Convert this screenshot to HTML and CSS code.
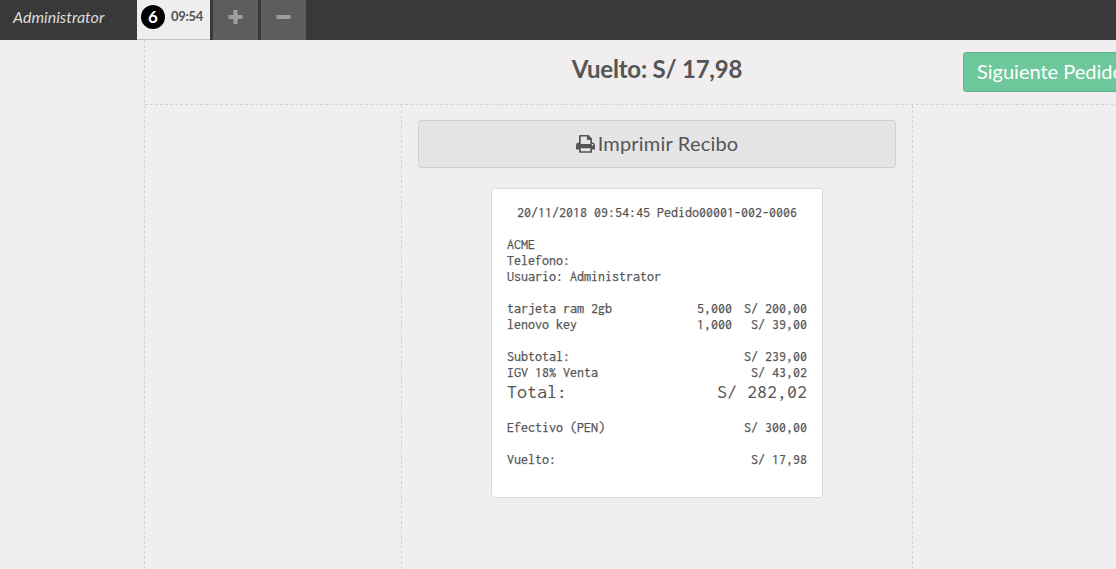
FILE: index.html
```html
<!DOCTYPE html>
<html lang="es">
<head>
<meta charset="utf-8">
<title>Recibo</title>
<link rel="stylesheet" href="styles.css">
</head>
<body>
<header class="topbar">
  <div class="username">Administrator</div>
  <div class="order-tab"><span class="order-number">6</span><span class="order-time">09:54</span></div>
  <button class="order-button" aria-label="Nuevo pedido"><svg width="15" height="15" viewBox="0 0 15 15"><path d="M6 0h3q.6 0 .6.6V5h4.300q.7 0 .7.7v2.600q0 .7-.7.7H9.600v4.400q0 .6-.6.6H6q-.6 0-.6-.6V9H1.100q-.7 0-.7-.7V5.700q0-.7.7-.7h4.300V.6Q5.400 0 6 0z"/></svg></button>
  <button class="order-button" aria-label="Eliminar pedido"><svg width="15" height="15" viewBox="0 0 15 15"><rect x=".4" y="5" width="14.200" height="4" rx=".8"/></svg></button>
</header>
<main class="screen">
  <div class="screen-head">
    <h1 class="change">Vuelto: S/ 17,98</h1>
    <button class="next"><span>Siguiente Pedido</span></button>
  </div>
  <div class="columns">
    <section class="center">
      <button class="print"><svg width="19" height="18" viewBox="0 0 19 18"><path fill-rule="evenodd" d="M3 1Q3 0 4 0h8.500L16 3.400V7.500q3 .2 3 3V14q0 .6-.6.6H16V17q0 .8-.8.8H3.800Q3 17.800 3 17v-2.400H.6q-.6 0-.6-.6v-3.500q0-2.800 3-3zM4.700 1.600V9h9.600V5h-2.500q-.9 0-.9-.9V1.600zM4.700 13.200v3h9.600v-3zM16.600 9a.8.8 0 1 0 .01 0z"/></svg><span>Imprimir Recibo</span></button>
      <article class="receipt">
        <p class="stamp">20/11/2018 09:54:45 Pedido00001-002-0006</p>
        <div class="group"><p>ACME</p><p>Telefono:</p><p>Usuario: Administrator</p></div>
        <div class="group">
          <div class="item"><span>tarjeta ram 2gb</span><span>5,000</span><span>S/ 200,00</span></div>
          <div class="item"><span>lenovo key</span><span>1,000</span><span>S/ 39,00</span></div>
        </div>
        <div class="group">
          <div class="row"><span>Subtotal:</span><span>S/ 239,00</span></div>
          <div class="row"><span>IGV 18% Venta</span><span>S/ 43,02</span></div>
          <div class="row total"><span>Total:</span><span>S/ 282,02</span></div>
        </div>
        <div class="group row"><span>Efectivo (PEN)</span><span>S/ 300,00</span></div>
        <div class="row"><span>Vuelto:</span><span>S/ 17,98</span></div>
      </article>
    </section>
  </div>
</main>
</body>
</html>
```
FILE: styles.css
```css
* { box-sizing: border-box; }
html, body { height: 100%; }
body {
  margin: 0;
  overflow: hidden;
  display: flex;
  flex-direction: column;
  background: #f0eeee;
  color: #555;
  font-family: Lato, sans-serif;
}
button { font-family: inherit; margin: 0; padding: 0; }
.topbar {
  display: flex;
  flex: none;
  height: 40px;
  background: #393939;
}
.username {
  width: 137px;
  padding-left: 13px;
  line-height: 34px;
  font-size: 16px;
  font-style: italic;
  color: #ddd;
}
.order-tab {
  display: flex;
  width: 73px;
  margin-right: 3px;
  padding: 5px 0 0 4px;
  background: #eee;
  border-bottom: 1px solid #bdc0be;
  font-weight: 700;
}
.order-number {
  width: 24px;
  height: 24px;
  border-radius: 50%;
  background: #000;
  color: #fff;
  font-size: 17px;
  line-height: 24px;
  text-align: center;
}
.order-time { margin-left: 6px; font-size: 13px; line-height: 23px; letter-spacing: -.3px; }
.order-button {
  display: flex;
  justify-content: center;
  width: 45px;
  margin-right: 3px;
  padding-top: 10px;
  border: 0;
  background: #5d5d5d;
  fill: #9d9d9d;
}
.screen {
  display: flex;
  flex: 1;
  flex-direction: column;
  width: 1025px;
  margin-left: 144px;
  border-left: 1px dashed #d4d2d2;
}
.screen-head {
  display: grid;
  grid-template-columns: 256px 512px 256px;
  flex: none;
  height: 65px;
  border-bottom: 1px dashed #d4d2d2;
}
.change {
  grid-column: 2;
  margin: 0;
  font-size: 24px;
  letter-spacing: -.22px;
  line-height: 58px;
  text-align: center;
}
.next {
  justify-self: end;
  width: 190px;
  height: 40px;
  margin: 12px 16px 0 0;
  border: 1px solid #64af8a;
  border-radius: 3px;
  background: #6ec89b;
  color: #fff;
  font-size: 20px;
  line-height: 36px;
  padding: 0 0 2px 13px;
  text-align: left;
  white-space: nowrap;
}
.columns { display: flex; flex: 1; padding-left: 256px; }
.center {
  width: 512px;
  padding: 15px 16px 0;
  border-left: 1px dashed #d4d2d2;
  border-right: 1px dashed #d4d2d2;
}
.print {
  display: flex;
  align-items: center;
  justify-content: center;
  gap: 3px;
  width: 478px;
  height: 48px;
  border: 1px solid #cfd1d0;
  border-radius: 3px;
  background: #e5e5e5;
  color: #555;
  fill: #555;
  font-size: 20px;
  letter-spacing: .2px;
}
.print span { padding-bottom: 2px; }
.receipt {
  width: 332px;
  height: 310px;
  margin: 20px auto 0;
  padding: 16px 15px;
  border: 1px solid #dcdcdc;
  border-radius: 3px;
  background: #fff;
  font-family: Inconsolata, monospace;
  font-size: 14px;
  line-height: 16px;
  -webkit-text-stroke: .25px #555;
}
.receipt p { margin: 0; }
.receipt .stamp { margin-bottom: 16px; text-align: center; white-space: nowrap; }
.group { margin-bottom: 16px; }
.item { display: grid; grid-template-columns: 150px 75px 75px; }
.item span:not(:first-child) { text-align: right; }
.row { display: flex; justify-content: space-between; }
.total { font-size: 20px; line-height: 21px; padding-bottom: 2px; -webkit-text-stroke: 0; }
```
